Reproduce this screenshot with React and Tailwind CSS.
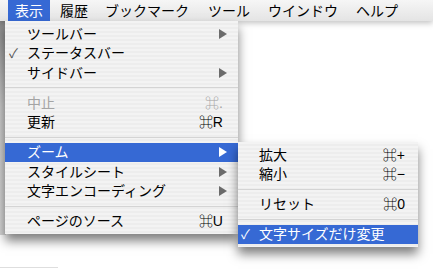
const stripes = 'bg-[image:repeating-linear-gradient(180deg,#f3f3f3_0px,#f3f3f3_2px,#ededed_2px,#ededed_4px)]'

function Arrow({ active }) {
  return (
    <svg width="8" height="10" viewBox="0 0 8 10" className="ml-auto">
      <path d="M0 0 L8 5 L0 10 Z" fill={active ? '#ffffff' : '#6b6b6b'} />
    </svg>
  )
}

function Item({ label, shortcut, arrow, check, active, disabled, pl = 'pl-[4px]', pr = 'pr-[11px]' }) {
  return (
    <div
      className={`flex items-center h-[19.5px] ${pl} ${pr} ${active ? 'bg-[#3669d4] text-white' : disabled ? 'text-[#a4a4a4]' : 'text-black'}`}
    >
      <span className={`w-[18px] text-[13px] leading-none ${active ? '' : 'text-[#555]'}`}>{check ? '✓' : ''}</span>
      <span className="flex-1 leading-none">{label}</span>
      {shortcut && <span className="mr-[4px] leading-none">{shortcut}</span>}
      {arrow && <Arrow active={active} />}
    </div>
  )
}

function Sep() {
  return (
    <div className="h-[10.5px] flex items-center">
      <div className="w-full h-px bg-[#d4d4d4]" />
    </div>
  )
}

export default function App() {
  const menus = [
    { t: '表示', ml: 'ml-[8px] px-[7px] bg-[#3669d4] text-white' },
    { t: '履歴', ml: 'ml-[10px]' },
    { t: 'ブックマーク', ml: 'ml-[17px]' },
    { t: 'ツール', ml: 'ml-[19px]' },
    { t: 'ウインドウ', ml: 'ml-[18px]' },
    { t: 'ヘルプ', ml: 'ml-[18px]' },
  ]

  return (
    <div className="relative w-[433px] h-[270px] bg-white overflow-hidden text-[14px] font-['Liberation_Sans','Noto_Sans_CJK_JP',sans-serif]">
      <div className="relative z-10 flex items-stretch h-[21px] bg-[linear-gradient(180deg,#f6f6f6,#e4e4e4)] shadow-[0_2px_6px_rgba(0,0,0,0.25)]">
        {menus.map(m => (
          <div key={m.t} className={`flex items-center leading-none ${m.ml}`}>{m.t}</div>
        ))}
      </div>

      <div className="absolute left-0 top-[21px] w-[6px] h-[214px] bg-[linear-gradient(180deg,#8a8a8a,#c9c9c9_40%,#d6d6d6)]" />
      <div className="absolute left-0 top-[267px] w-[58px] h-px bg-[#dedede]" />

      <div className={`absolute z-20 left-[5px] top-[21px] w-[233px] pt-[3px] pb-[3px] ${stripes} shadow-[0_7px_10px_rgba(0,0,0,0.5)]`}>
        <Item label="ツールバー" arrow />
        <Item label="ステータスバー" check />
        <Item label="サイドバー" arrow />
        <Sep />
        <Item label="中止" shortcut="⌘." disabled />
        <Item label="更新" shortcut="⌘R" />
        <Sep />
        <Item label="ズーム" arrow active />
        <Item label="スタイルシート" arrow />
        <Item label="文字エンコーディング" arrow />
        <Sep />
        <Item label="ページのソース" shortcut="⌘U" />
      </div>

      <div className={`absolute z-30 left-[238px] top-[142px] w-[180px] pt-[3px] pb-[3px] ${stripes} shadow-[0_7px_10px_rgba(0,0,0,0.5)]`}>
        <Item label="拡大" shortcut="⌘+" pl="pl-[3px]" pr="pr-[9px]" />
        <Item label="縮小" shortcut="⌘−" pl="pl-[3px]" pr="pr-[9px]" />
        <Sep />
        <Item label="リセット" shortcut="⌘0" pl="pl-[3px]" pr="pr-[9px]" />
        <Sep />
        <Item label="文字サイズだけ変更" check active pl="pl-[3px]" pr="pr-[9px]" />
      </div>
    </div>
  )
}
